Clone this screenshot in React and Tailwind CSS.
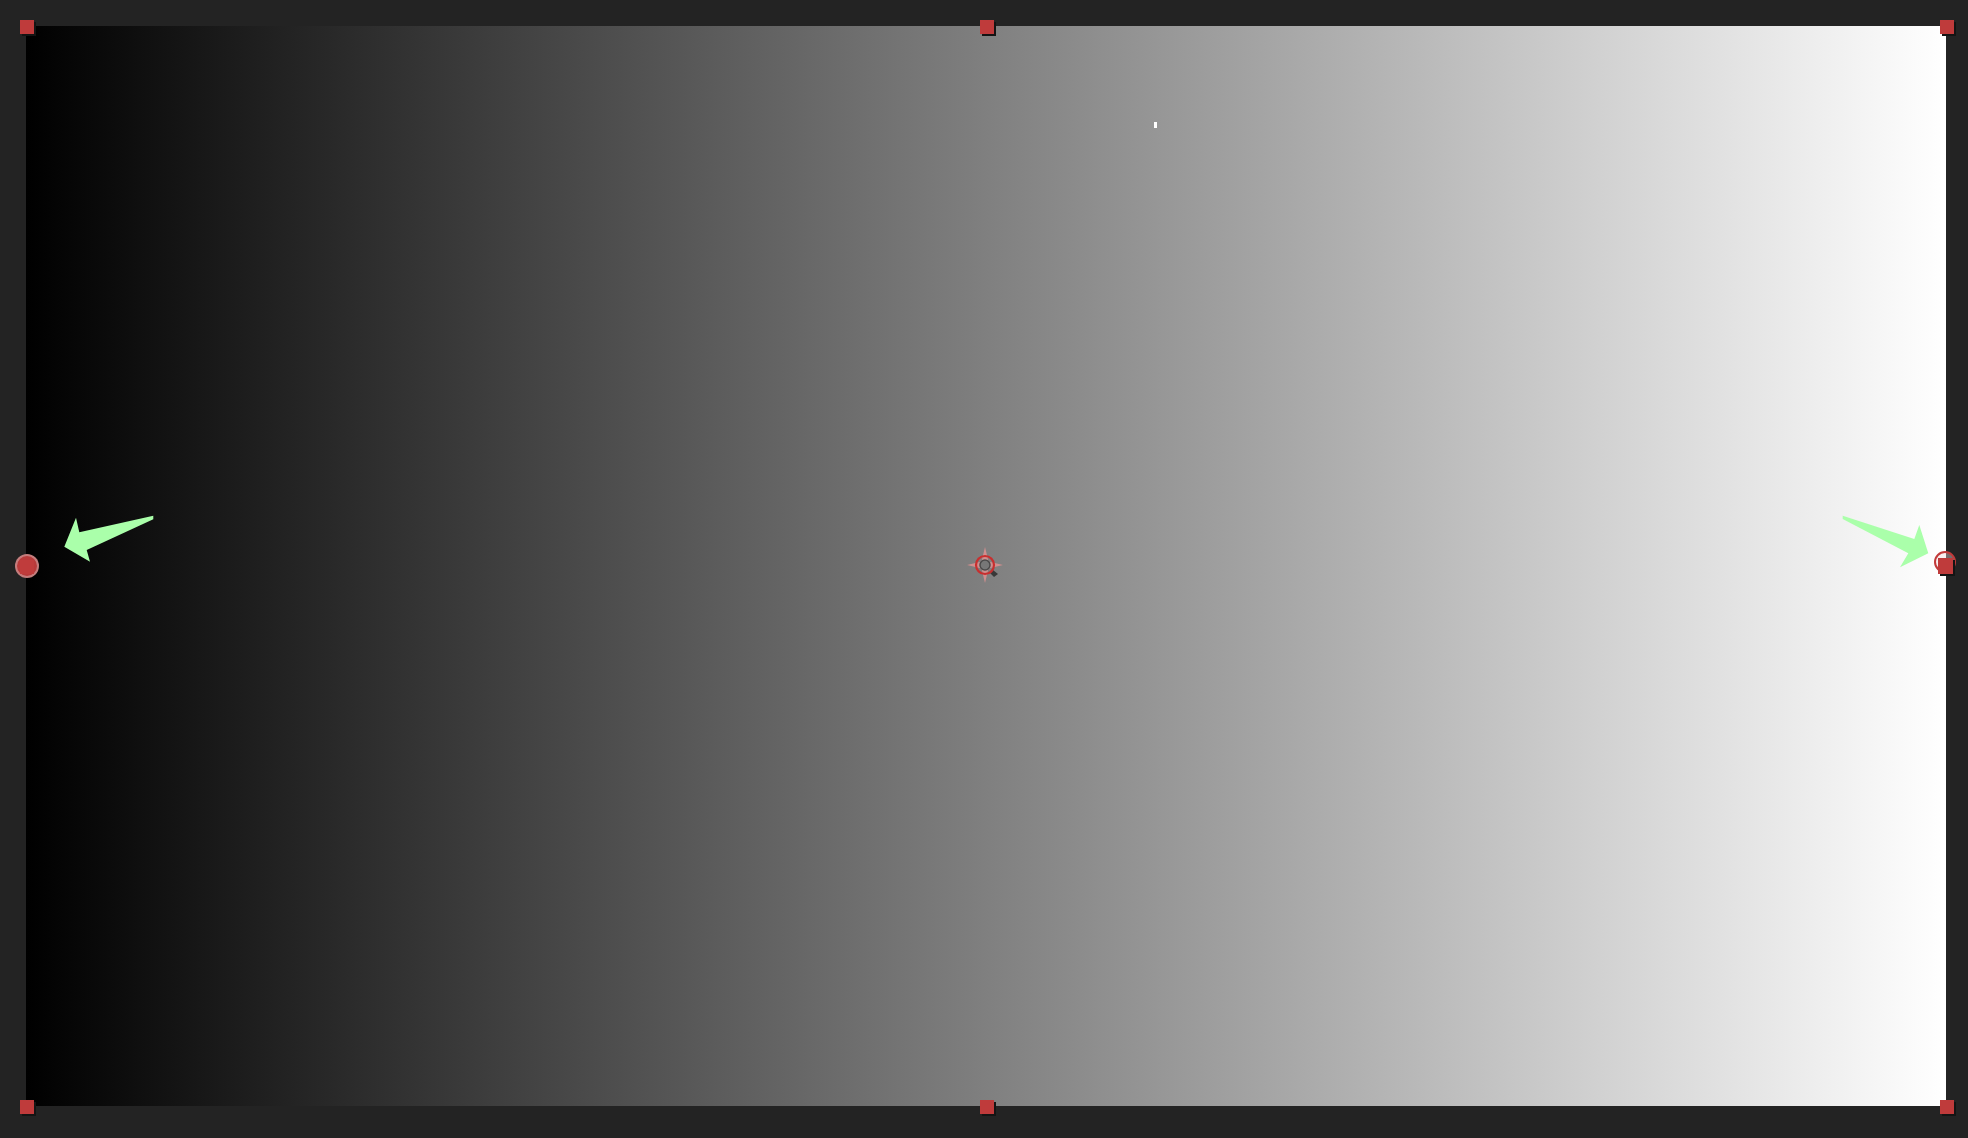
import React from "react";

// red drag handle, 14px
function Handle({ className = "" }) {
  return (
    <div className={`w-[14px] h-[14px] bg-[#bf3b3b] shadow-[2px_2px_0_#141414] ${className}`} />
  );
}

function Crosshair() {
  return (
    <svg className="absolute left-[937px] top-[517px]" width="44" height="44" viewBox="0 0 44 44">
      <path
        d="M22 4 L25.5 18.5 L40 22 L25.5 25.5 L22 40 L18.5 25.5 L4 22 L18.5 18.5 Z"
        fill="#e39292"
        fillOpacity="0.8"
      />
      <path d="M30 27 A9 9 0 0 1 27 30 L31 34 L35 31 Z" fill="#1a1a1a" fillOpacity="0.7" />
      <circle cx="22" cy="22" r="9" fill="none" stroke="#c82f2f" strokeWidth="2.2" />
      <circle cx="22" cy="22" r="5" fill="#777" stroke="#4a4a4a" strokeWidth="1.5" />
    </svg>
  );
}

export default function App() {
  return (
    <div className="w-[1968px] h-[1138px] bg-[#232323] p-[26px] overflow-hidden">
      <div className="relative w-[1920px] h-[1080px] bg-[linear-gradient(to_right,#000000,#ffffff)]">
        {/* handle frame */}
        <div className="absolute -left-[6px] -right-[8px] -top-[6px] -bottom-[8px] flex flex-col justify-between">
          <div className="flex justify-between">
            <Handle />
            <Handle />
            <Handle />
          </div>
          <div className="flex justify-between">
            <div className="relative w-[14px] h-[14px]">
              <div className="absolute -left-[5px] -top-[6px] w-[24px] h-[24px] rounded-full bg-[#b83a3a] border-2 border-[#c99a9a]/70" />
              <div className="absolute inset-0 bg-[#c03c3c]" />
            </div>
            <div className="relative w-[14px] h-[14px]">
              <div className="absolute -left-[6px] -top-[9px] w-[22px] h-[22px] rounded-full border-2 border-[#c23a3a] bg-[#f3dada]/40" />
              <Handle className="absolute -left-[2px] -top-[2px] w-[15px] h-[16px]" />
            </div>
          </div>
          <div className="flex justify-between">
            <Handle />
            <Handle />
            <Handle />
          </div>
        </div>

        <Crosshair />

        {/* tiny white mark */}
        <div className="absolute left-[1128px] top-[96px] w-[3px] h-[6px] bg-white" />

        {/* green arrows */}
        <svg className="absolute left-0 top-[480px]" width="140" height="70" viewBox="0 480 140 70">
          <polygon
            points="38.3,520.7 50,491.7 53.3,506.3 127.3,489.7 127.3,493.3 60.7,524 64,535.7"
            fill="#aaffaa"
          />
        </svg>
        <svg className="absolute left-[1800px] top-[480px]" width="120" height="70" viewBox="1800 480 120 70">
          <polygon
            points="1816.7,489.7 1888.3,513 1893.3,499 1902.3,527.3 1874,541.3 1882.3,527.3 1816.7,493"
            fill="#aaffaa"
          />
        </svg>
      </div>
    </div>
  );
}
